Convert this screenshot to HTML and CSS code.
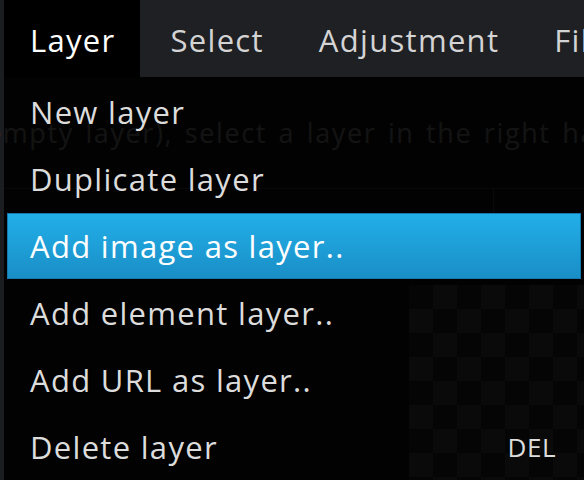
FILE: index.html
```html
<!DOCTYPE html>
<html>
<head>
<meta charset="utf-8">
<link rel="stylesheet" href="styles.css">
</head>
<body>
<div class="app">
  <nav class="menubar">
    <div class="menubar-item active">Layer</div>
    <div class="menubar-item">Select</div>
    <div class="menubar-item">Adjustment</div>
    <div class="menubar-item">Filter</div>
  </nav>
  <main class="workspace">
    <p class="hint">empty layer), select a layer in the right hand panel</p>
    <div class="panels">
      <div class="panel-left"></div>
      <div class="panel-right"></div>
    </div>
    <div class="stage">
      <div class="canvas"></div>
    </div>
  </main>
  <div class="dropdown">
    <div class="dd-item">New layer</div>
    <div class="dd-item">Duplicate layer</div>
    <div class="dd-item selected">Add image as layer..</div>
    <div class="dd-item">Add element layer..</div>
    <div class="dd-item">Add URL as layer..</div>
    <div class="dd-item"><span>Delete layer</span><span class="shortcut">DEL</span></div>
  </div>
</div>
</body>
</html>
```

FILE: styles.css
```css
html, body {
  margin: 0;
  padding: 0;
  background: #1c1d20;
  overflow: hidden;
}
.app {
  position: relative;
  width: 584px;
  height: 480px;
  font-family: "Open Sans", "DejaVu Sans", sans-serif;
  overflow: hidden;
}
.menubar {
  display: flex;
  gap: 5px;
  height: 77px;
  margin-left: 4px;
  background: #1f2024;
  white-space: nowrap;
}
.menubar-item {
  display: flex;
  align-items: center;
  padding: 3px 24px 0 26px;
  font-size: 31px;
  letter-spacing: 1.3px;
  color: #d4d4d4;
}
.menubar-item.active {
  background: #000;
  color: #fff;
}
.workspace {
  display: flex;
  flex-direction: column;
}
.hint {
  margin: 38px 0 0 -14px;
  font-size: 27px;
  letter-spacing: 1.6px;
  word-spacing: 3px;
  line-height: 36px;
  color: #bdbdbd;
  white-space: nowrap;
}
.panels {
  display: flex;
  height: 25px;
  margin-top: 37px;
  margin-left: 4px;
  border-top: 1px solid #555;
}
.panel-left {
  flex: 0 0 489px;
  border-right: 1px solid #666;
}
.panel-right {
  flex: 1;
}
.stage {
  display: flex;
  justify-content: flex-end;
  padding-top: 71px;
}
.canvas {
  width: 175px;
  height: 200px;
  background-color: #333;
  background-image:
    linear-gradient(45deg, #6a6a6a 25%, transparent 25%, transparent 75%, #6a6a6a 75%),
    linear-gradient(45deg, #6a6a6a 25%, transparent 25%, transparent 75%, #6a6a6a 75%);
  background-size: 48px 48px;
  background-position: 0 0, 24px 24px;
}
.dropdown {
  position: absolute;
  top: 77px;
  left: 4px;
  right: 0;
  bottom: 0;
  padding-top: 2px;
  background: rgba(0, 0, 0, 0.9);
  display: flex;
  flex-direction: column;
}
.dd-item {
  display: flex;
  justify-content: space-between;
  align-items: center;
  height: 66px;
  margin: 0 3px;
  padding: 0 24px 0 22px;
  border: 1px solid transparent;
  font-size: 31px;
  letter-spacing: 1.3px;
  color: #dcdcdc;
  white-space: nowrap;
}
.dd-item.selected {
  background: linear-gradient(#22afe9, #1a8ec6);
  border-color: #1577ab;
  color: #fff;
}
.shortcut {
  font-size: 26px;
  letter-spacing: 0.5px;
  color: #dcdcdc;
}
```
